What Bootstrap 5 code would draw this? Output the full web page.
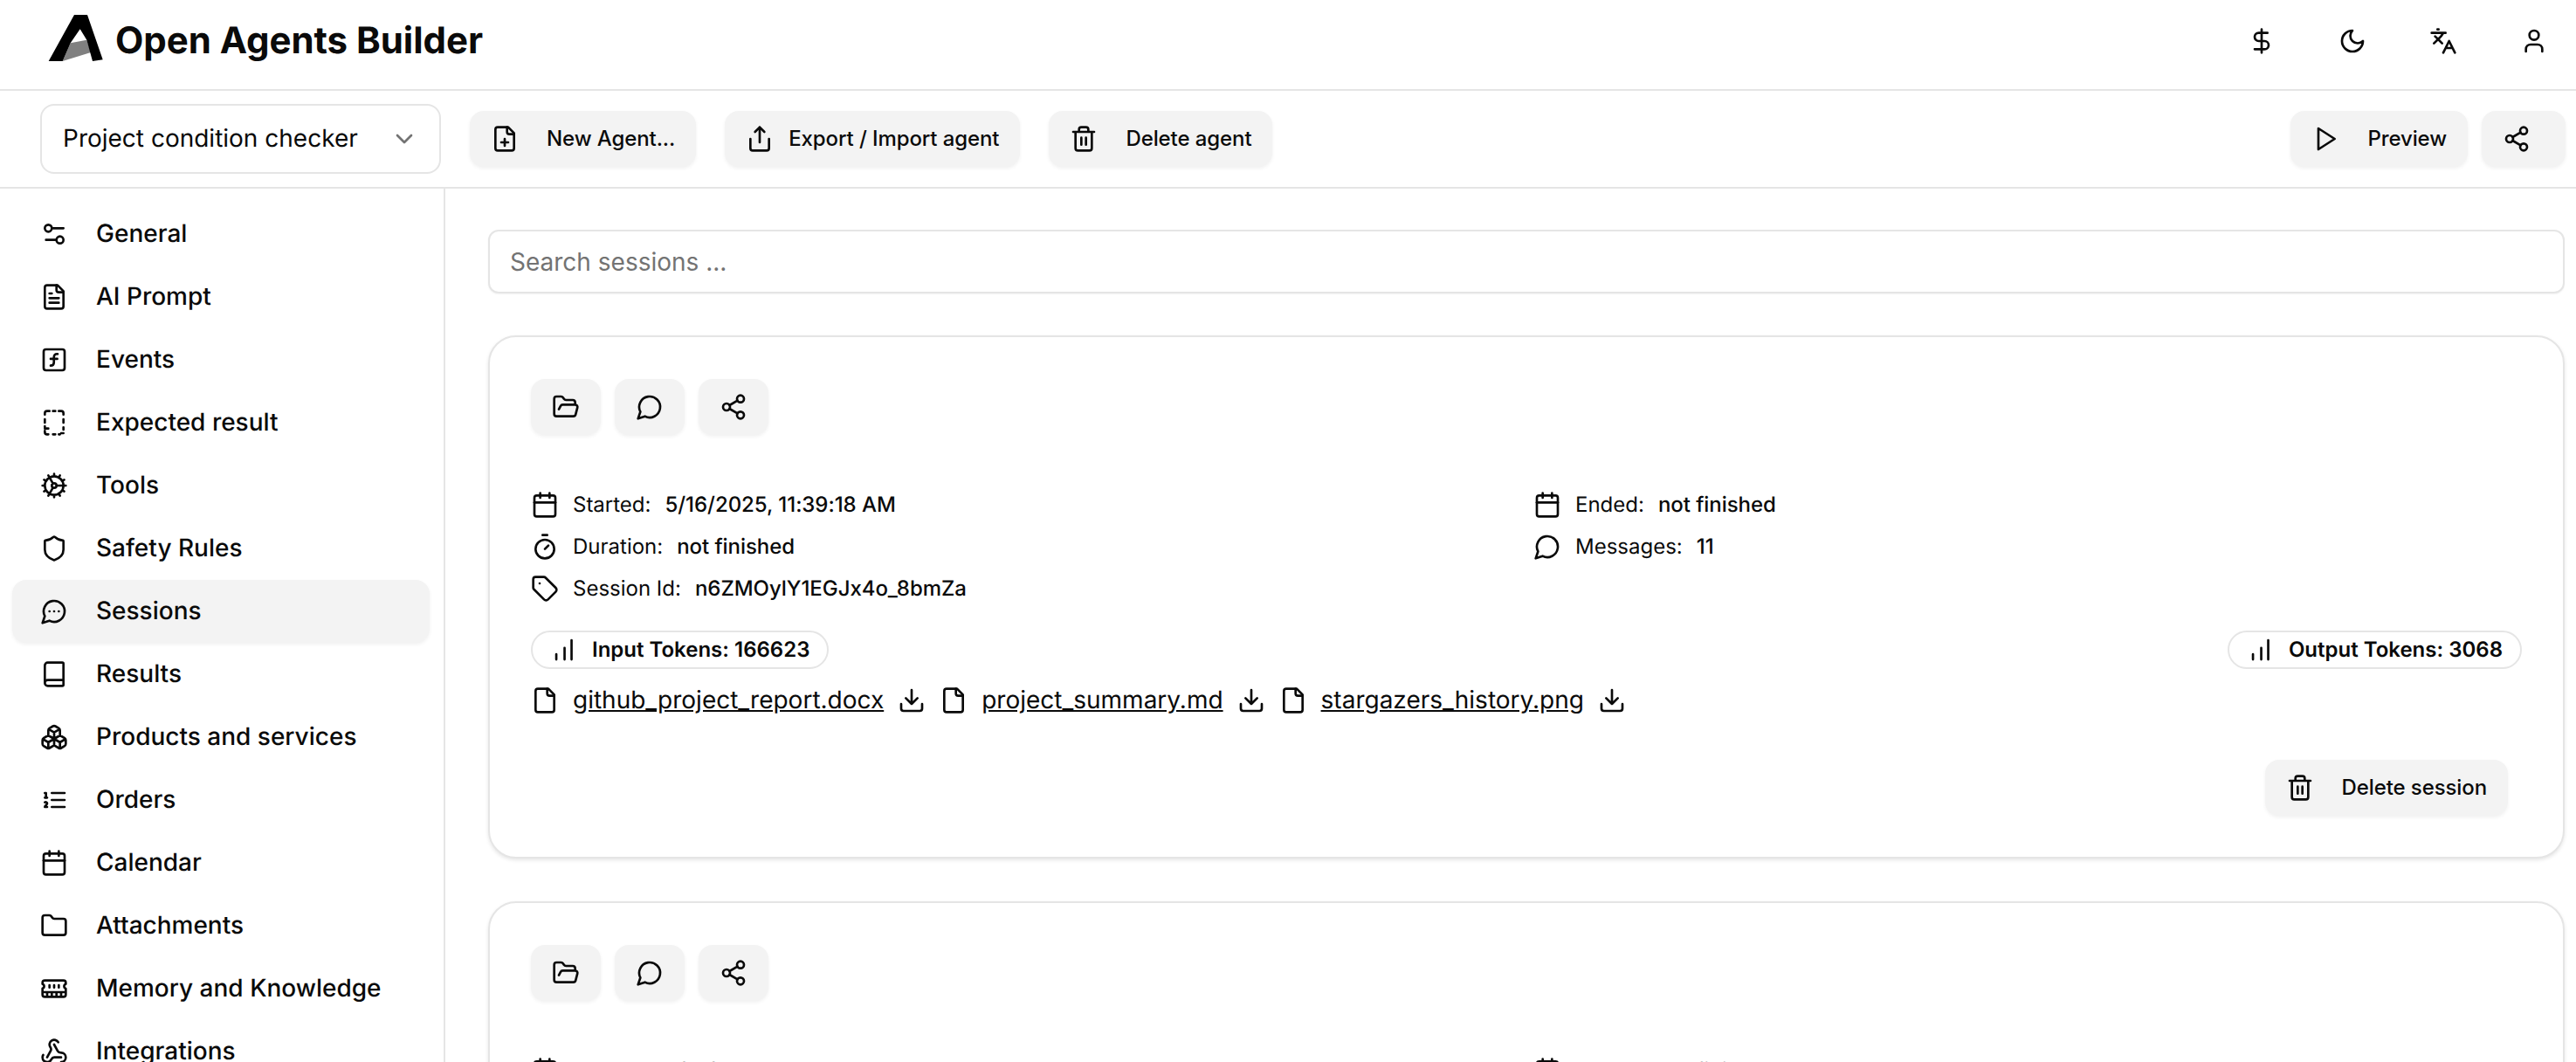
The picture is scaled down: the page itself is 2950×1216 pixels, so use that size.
<!doctype html>
<html lang="en">
<head>
<meta charset="utf-8">
<title>Open Agents Builder</title>
<link href="https://cdn.jsdelivr.net/npm/bootstrap@5.3.0/dist/css/bootstrap.min.css" rel="stylesheet">
<style>
html,body{height:1216px;overflow:hidden;background:#fff}
body{font-family:Inter,"Liberation Sans",sans-serif;color:#0a0a0a;font-size:28px;line-height:1.4;text-rendering:geometricPrecision}
svg.ic{width:32px;height:32px;flex:none;fill:none;stroke:currentColor;stroke-width:2;stroke-linecap:round;stroke-linejoin:round}
.app-head{height:104px;border-bottom:2px solid #e5e5e5;padding:0 0 8px 54px}
.app-logo{width:66px;height:56px;margin-right:12px;margin-bottom:8px;flex:none}
.app-title{font-size:42px;font-weight:700;line-height:1;letter-spacing:-.05px}
.head-ico{width:104px;height:64px}
.head-tools{margin-right:-4px}
.tool-bar{height:112px;border-bottom:2px solid #e5e5e5;padding:0 12px 0 46px;gap:33px}
.agent-sel{width:459px;height:80px;border:2px solid #e5e5e5;border-radius:16px;padding:0 24px;font-size:28px}
.agent-sel svg{color:#737373}
.act-btn{height:64px;border:0;border-radius:16px;background:#f3f3f3;color:#0a0a0a;font-size:24px;font-weight:500;line-height:1;letter-spacing:-.1px;padding:0 24px;gap:32px;box-shadow:0 2px 4px rgba(0,0,0,.06);white-space:nowrap}
.act-btn:hover{background:#ececec}
.gap-narrow{gap:17px}
.btn-ico{width:80px;padding:0;justify-content:center}
.btn-ico-w{width:96px;padding:0 0 0 24px;justify-content:flex-start}
.side-nav{width:510px;height:1000px;border-right:2px solid #e5e5e5;padding:16px 16px 0 14px;overflow:hidden;flex:none}
.side-item{height:72px;border-radius:16px;padding-left:32px;gap:32px;color:#0a0a0a;text-decoration:none;font-size:28px;font-weight:500;white-space:nowrap}
.side-item.on{background:#f3f3f3;box-shadow:0 2px 4px rgba(0,0,0,.06)}
.main-pane{padding:47px 13px 0 49px;overflow:hidden;height:1000px}
.find-box{height:73px;border:2px solid #e5e5e5;border-radius:12px;font-size:28px;padding:0 23px;box-shadow:0 1px 2px rgba(0,0,0,.05)}
.find-box::placeholder{color:#737373}
.sess-card{border:2px solid #e5e5e5;border-radius:32px;box-shadow:0 2px 4px rgba(0,0,0,.1);padding:48px 47px 47px;margin-top:48px;background:#fff}
.sess-card + .sess-card{margin-top:49px}
.sess-ops{gap:16px;margin-bottom:56px}
.meta-grid{display:grid;grid-template-columns:1fr 1fr;column-gap:16px;font-size:24px}
.meta-line{height:48px;gap:16px;white-space:nowrap}
.meta-line span{font-weight:500;letter-spacing:-.05px}
.meta-line span:first-of-type{font-weight:400;letter-spacing:0}
.tok-row{margin-top:24px}
.tok-pill{height:44px;border:2px solid #e5e5e5;border-radius:22px;padding:0 20px;gap:16px;font-size:24px;font-weight:600;line-height:1}
.file-row{gap:16px;margin-top:14px;height:44px;font-size:28px}
.file-row a{color:#0a0a0a;text-decoration:underline;white-space:nowrap}
.end-row{margin-top:46px;padding-right:16px}
</style>
</head>
<body>
<svg width="0" height="0" class="position-absolute">
<defs>
<symbol id="i-share" viewBox="0 0 24 24"><circle cx="18" cy="5" r="3"/><circle cx="6" cy="12" r="3"/><circle cx="18" cy="19" r="3"/><path d="m8.59 13.51 6.83 3.98M15.41 6.51l-6.82 3.98"/></symbol>
<symbol id="i-trash" viewBox="0 0 24 24"><path d="M3 6h18M19 6v14a2 2 0 0 1-2 2H7a2 2 0 0 1-2-2V6M8 6V4a2 2 0 0 1 2-2h4a2 2 0 0 1 2 2v2M10 11v6M14 11v6"/></symbol>
<symbol id="i-cal" viewBox="0 0 24 24"><path d="M8 2v4M16 2v4"/><rect x="3" y="4" width="18" height="18" rx="2"/><path d="M3 10h18"/></symbol>
<symbol id="i-msg" viewBox="0 0 24 24"><path d="M7.9 20A9 9 0 1 0 4 16.1L2 22Z"/></symbol>
<symbol id="i-folderopen" viewBox="0 0 24 24"><path d="m6 14 1.5-2.9A2 2 0 0 1 9.24 10H20a2 2 0 0 1 1.94 2.5l-1.54 6a2 2 0 0 1-1.95 1.5H4a2 2 0 0 1-2-2V5a2 2 0 0 1 2-2h3.9a2 2 0 0 1 1.69.9l.81 1.2a2 2 0 0 0 1.67.9H18a2 2 0 0 1 2 2v2"/></symbol>
<symbol id="i-bars" viewBox="0 0 24 24"><path d="M5.300 20.300v-4.500M12.400 20.300v-10M18.400 20.300V3.800"/></symbol>
<symbol id="i-file" viewBox="0 0 24 24"><path d="M15 2H6a2 2 0 0 0-2 2v16a2 2 0 0 0 2 2h12a2 2 0 0 0 2-2V7Z"/><path d="M14 2v4a2 2 0 0 0 2 2h4"/></symbol>
<symbol id="i-dl" viewBox="0 0 24 24"><path d="M21 15v4a2 2 0 0 1-2 2H5a2 2 0 0 1-2-2v-4M7 10l5 5 5-5M12 15V3"/></symbol>
</defs>
</svg>

<header class="app-head d-flex align-items-center justify-content-between">
  <div class="d-flex align-items-center">
    <svg class="app-logo" viewBox="0 0 66 56" aria-hidden="true">
      <polygon fill="#808080" points="17.700,55 26.700,34.300 45.300,30.700 50,45"/>
      <polygon fill="#000" points="31,2 46,2 63.700,53.300 52,55 45.300,30.700 37.700,18.300 26.700,34.300 17.700,55 1.700,55"/>
    </svg>
    <span class="app-title">Open Agents Builder</span>
  </div>
  <div class="d-flex head-tools">
    <div class="head-ico d-flex align-items-center justify-content-center"><svg class="ic" viewBox="0 0 24 24"><path d="M12 2v20M17 5H9.5a3.5 3.5 0 0 0 0 7h5a3.5 3.5 0 0 1 0 7H6"/></svg></div>
    <div class="head-ico d-flex align-items-center justify-content-center"><svg class="ic" viewBox="0 0 24 24"><path d="M12 3a6 6 0 0 0 9 9 9 9 0 1 1-9-9Z"/></svg></div>
    <div class="head-ico d-flex align-items-center justify-content-center"><svg class="ic" viewBox="0 0 24 24"><path d="m5 8 6 6M4 14l6-6 2-3M2 5h12M7 2h1M22 22l-5-10-5 10M14 18h6"/></svg></div>
    <div class="head-ico d-flex align-items-center justify-content-center"><svg class="ic" viewBox="0 0 24 24"><path d="M19 21v-2a4 4 0 0 0-4-4H9a4 4 0 0 0-4 4v2"/><circle cx="12" cy="7" r="4"/></svg></div>
  </div>
</header>

<div class="tool-bar d-flex align-items-center">
  <div class="agent-sel d-flex align-items-center justify-content-between"><span>Project condition checker</span><svg class="ic" viewBox="0 0 24 24"><path d="m6 9 6 6 6-6"/></svg></div>
  <button class="btn act-btn d-flex align-items-center"><svg class="ic" viewBox="0 0 24 24"><path d="M15 2H6a2 2 0 0 0-2 2v16a2 2 0 0 0 2 2h12a2 2 0 0 0 2-2V7Z"/><path d="M14 2v4a2 2 0 0 0 2 2h4M9 15h6M12 18v-6"/></svg>New Agent...</button>
  <button class="btn act-btn gap-narrow d-flex align-items-center"><svg class="ic" viewBox="0 0 24 24"><path d="M4 12v8a2 2 0 0 0 2 2h12a2 2 0 0 0 2-2v-8M16 6l-4-4-4 4M12 2v13"/></svg>Export / Import agent</button>
  <button class="btn act-btn d-flex align-items-center"><svg class="ic"><use href="#i-trash"/></svg>Delete agent</button>
  <div class="ms-auto d-flex gap-3">
    <button class="btn act-btn d-flex align-items-center"><svg class="ic" viewBox="0 0 24 24"><path d="m6 3 14 9-14 9V3z"/></svg>Preview</button>
    <button class="btn act-btn btn-ico-w d-flex align-items-center"><svg class="ic"><use href="#i-share"/></svg></button>
  </div>
</div>

<div class="d-flex">
  <nav class="side-nav">
    <a class="side-item d-flex align-items-center" href="#"><svg class="ic" viewBox="0 0 24 24"><path d="M20 7h-9M14 17H5"/><circle cx="17" cy="17" r="3"/><circle cx="7" cy="7" r="3"/></svg>General</a>
    <a class="side-item d-flex align-items-center" href="#"><svg class="ic" viewBox="0 0 24 24"><path d="M15 2H6a2 2 0 0 0-2 2v16a2 2 0 0 0 2 2h12a2 2 0 0 0 2-2V7Z"/><path d="M14 2v4a2 2 0 0 0 2 2h4M10 9H8M16 13H8M16 17H8"/></svg>AI Prompt</a>
    <a class="side-item d-flex align-items-center" href="#"><svg class="ic" viewBox="0 0 24 24"><rect x="3" y="3" width="18" height="18" rx="2"/><path d="M9 17c2 0 2.800-1 2.800-2.800V10c0-2 1-3.300 3.200-3M9 11.200h5.700"/></svg>Events</a>
    <a class="side-item d-flex align-items-center" href="#"><svg class="ic" viewBox="0 0 24 24"><path d="M8 2H6a2 2 0 0 0-2 2v1M11 2h2M16 2h2a2 2 0 0 1 2 2v1M20 9v3M20 16v2M20 21h-2M4 9v3M4 15v1M4 19v1a2 2 0 0 0 2 2h1M7 17H4M11 22h2M16 22h1"/></svg>Expected result</a>
    <a class="side-item d-flex align-items-center" href="#"><svg class="ic" viewBox="0 0 24 24"><path d="M12 20a8 8 0 1 0 0-16 8 8 0 0 0 0 16ZM12 14a2 2 0 1 0 0-4 2 2 0 0 0 0 4ZM12 2v2M12 22v-2M17 20.660l-1-1.730M11 10.270 7 3.340M20.660 17l-1.730-1M3.340 7l1.730 1M14 12h8M2 12h2M20.660 7l-1.730 1M3.340 17l1.730-1M17 3.340l-1 1.730M11 13.730l-4 6.930"/></svg>Tools</a>
    <a class="side-item d-flex align-items-center" href="#"><svg class="ic" viewBox="0 0 24 24"><path d="M20 13c0 5-3.500 7.500-7.660 8.950a1 1 0 0 1-.67-.01C7.500 20.500 4 18 4 13V6a1 1 0 0 1 1-1c2 0 4.500-1.200 6.240-2.720a1.170 1.170 0 0 1 1.520 0C14.510 3.810 17 5 19 5a1 1 0 0 1 1 1z"/></svg>Safety Rules</a>
    <a class="side-item on d-flex align-items-center" href="#"><svg class="ic" viewBox="0 0 24 24"><path d="M7.900 20A9 9 0 1 0 4 16.100L2 22Z"/><path d="M8 12h.01M12 12h.01M16 12h.01"/></svg>Sessions</a>
    <a class="side-item d-flex align-items-center" href="#"><svg class="ic" viewBox="0 0 24 24"><path d="M4 19.500v-15A2.500 2.500 0 0 1 6.500 2H19a1 1 0 0 1 1 1v18a1 1 0 0 1-1 1H6.500a1 1 0 0 1 0-5H20"/></svg>Results</a>
    <a class="side-item d-flex align-items-center" href="#"><svg class="ic" viewBox="0 0 24 24"><path d="M2.970 12.920A2 2 0 0 0 2 14.630v3.240a2 2 0 0 0 .97 1.710l3 1.800a2 2 0 0 0 2.060 0L12 19v-5.500l-5-3-4.030 2.420ZM7 16.500l-4.740-2.850M7 16.500l5-3M7 16.500v5.170M12 13.500V19l3.970 2.380a2 2 0 0 0 2.060 0l3-1.800a2 2 0 0 0 .97-1.710v-3.240a2 2 0 0 0-.97-1.710L17 10.500l-5 3ZM17 16.500l-5-3M17 16.500l4.740-2.850M17 16.500v5.170M7.970 4.420A2 2 0 0 0 7 6.130v4.370l5 3 5-3V6.130a2 2 0 0 0-.97-1.710l-3-1.800a2 2 0 0 0-2.060 0l-3 1.800ZM12 8 7.260 5.150M12 8l4.740-2.850M12 13.500V8"/></svg>Products and services</a>
    <a class="side-item d-flex align-items-center" href="#"><svg class="ic" viewBox="0 0 24 24"><path d="M10 12h11M10 18h11M10 6h11M4 10h2M4 6h1v4M6 18H4c0-1 2-2 2-3s-1-1.500-2-1"/></svg>Orders</a>
    <a class="side-item d-flex align-items-center" href="#"><svg class="ic"><use href="#i-cal"/></svg>Calendar</a>
    <a class="side-item d-flex align-items-center" href="#"><svg class="ic" viewBox="0 0 24 24"><path d="M20 20a2 2 0 0 0 2-2V8a2 2 0 0 0-2-2h-7.900a2 2 0 0 1-1.690-.9L9.600 3.900A2 2 0 0 0 7.930 3H4a2 2 0 0 0-2 2v13a2 2 0 0 0 2 2Z"/></svg>Attachments</a>
    <a class="side-item d-flex align-items-center" href="#"><svg class="ic" viewBox="0 0 24 24"><path d="M6 19v-3M10 19v-3M14 19v-3M18 19v-3M8 11V9M16 11V9M12 11V9M2 15h20M2 7a2 2 0 0 1 2-2h16a2 2 0 0 1 2 2v1.100a2 2 0 0 0 0 3.837V17a2 2 0 0 1-2 2H4a2 2 0 0 1-2-2v-5.100a2 2 0 0 0 0-3.837Z"/></svg>Memory and Knowledge</a>
    <a class="side-item d-flex align-items-center" href="#"><svg class="ic" viewBox="0 0 24 24"><path d="M18 16.980h-5.990c-1.100 0-1.950.94-2.480 1.900A4 4 0 0 1 2 17c.01-.700.200-1.400.570-2M6 17l3.130-5.780c.530-.970.100-2.180-.500-3.100a4 4 0 1 1 6.890-4.060"/><path d="m12 6 3.130 5.730C15.660 12.700 16.900 13 18 13a4 4 0 0 1 0 8"/></svg>Integrations</a>
  </nav>

  <main class="main-pane flex-grow-1">
    <input class="form-control find-box" type="text" placeholder="Search sessions ...">

    <section class="sess-card">
      <div class="sess-ops d-flex">
        <button class="btn act-btn btn-ico d-flex align-items-center"><svg class="ic"><use href="#i-folderopen"/></svg></button>
        <button class="btn act-btn btn-ico d-flex align-items-center"><svg class="ic"><use href="#i-msg"/></svg></button>
        <button class="btn act-btn btn-ico d-flex align-items-center"><svg class="ic"><use href="#i-share"/></svg></button>
      </div>
      <div class="meta-grid">
        <div class="meta-line d-flex align-items-center"><svg class="ic"><use href="#i-cal"/></svg><span>Started:</span><span>5/16/2025, 11:39:18 AM</span></div>
        <div class="meta-line d-flex align-items-center"><svg class="ic"><use href="#i-cal"/></svg><span>Ended:</span><span>not finished</span></div>
        <div class="meta-line d-flex align-items-center"><svg class="ic" viewBox="0 0 24 24"><path d="M10 2h4M12 14l3-3"/><circle cx="12" cy="14" r="8"/></svg><span>Duration:</span><span>not finished</span></div>
        <div class="meta-line d-flex align-items-center"><svg class="ic"><use href="#i-msg"/></svg><span>Messages:</span><span>11</span></div>
        <div class="meta-line d-flex align-items-center"><svg class="ic" viewBox="0 0 24 24"><path d="M12.586 2.586A2 2 0 0 0 11.172 2H4a2 2 0 0 0-2 2v7.172a2 2 0 0 0 .586 1.414l8.704 8.704a2.426 2.426 0 0 0 3.420 0l6.580-6.580a2.426 2.426 0 0 0 0-3.420z"/><path d="M7.500 7.500h.01"/></svg><span>Session Id:</span><span>n6ZMOylY1EGJx4o_8bmZa</span></div>
      </div>
      <div class="tok-row d-flex justify-content-between">
        <div class="tok-pill d-flex align-items-center"><svg class="ic"><use href="#i-bars"/></svg>Input Tokens: 166623</div>
        <div class="tok-pill d-flex align-items-center"><svg class="ic"><use href="#i-bars"/></svg>Output Tokens: 3068</div>
      </div>
      <div class="file-row d-flex align-items-center">
        <svg class="ic"><use href="#i-file"/></svg><a href="#">github_project_report.docx</a><svg class="ic"><use href="#i-dl"/></svg>
        <svg class="ic"><use href="#i-file"/></svg><a href="#">project_summary.md</a><svg class="ic"><use href="#i-dl"/></svg>
        <svg class="ic"><use href="#i-file"/></svg><a href="#">stargazers_history.png</a><svg class="ic"><use href="#i-dl"/></svg>
      </div>
      <div class="end-row d-flex justify-content-end">
        <button class="btn act-btn d-flex align-items-center"><svg class="ic"><use href="#i-trash"/></svg>Delete session</button>
      </div>
    </section>

    <section class="sess-card">
      <div class="sess-ops d-flex">
        <button class="btn act-btn btn-ico d-flex align-items-center"><svg class="ic"><use href="#i-folderopen"/></svg></button>
        <button class="btn act-btn btn-ico d-flex align-items-center"><svg class="ic"><use href="#i-msg"/></svg></button>
        <button class="btn act-btn btn-ico d-flex align-items-center"><svg class="ic"><use href="#i-share"/></svg></button>
      </div>
      <div class="meta-grid">
        <div class="meta-line d-flex align-items-center"><svg class="ic"><use href="#i-cal"/></svg><span>Started:</span><span>5/16/2025, 11:39:18 AM</span></div>
        <div class="meta-line d-flex align-items-center"><svg class="ic"><use href="#i-cal"/></svg><span>Ended:</span><span>not finished</span></div>
      </div>
    </section>
  </main>
</div>
<script src="https://cdn.jsdelivr.net/npm/bootstrap@5.3.0/dist/js/bootstrap.bundle.min.js"></script>
</body>
</html>
